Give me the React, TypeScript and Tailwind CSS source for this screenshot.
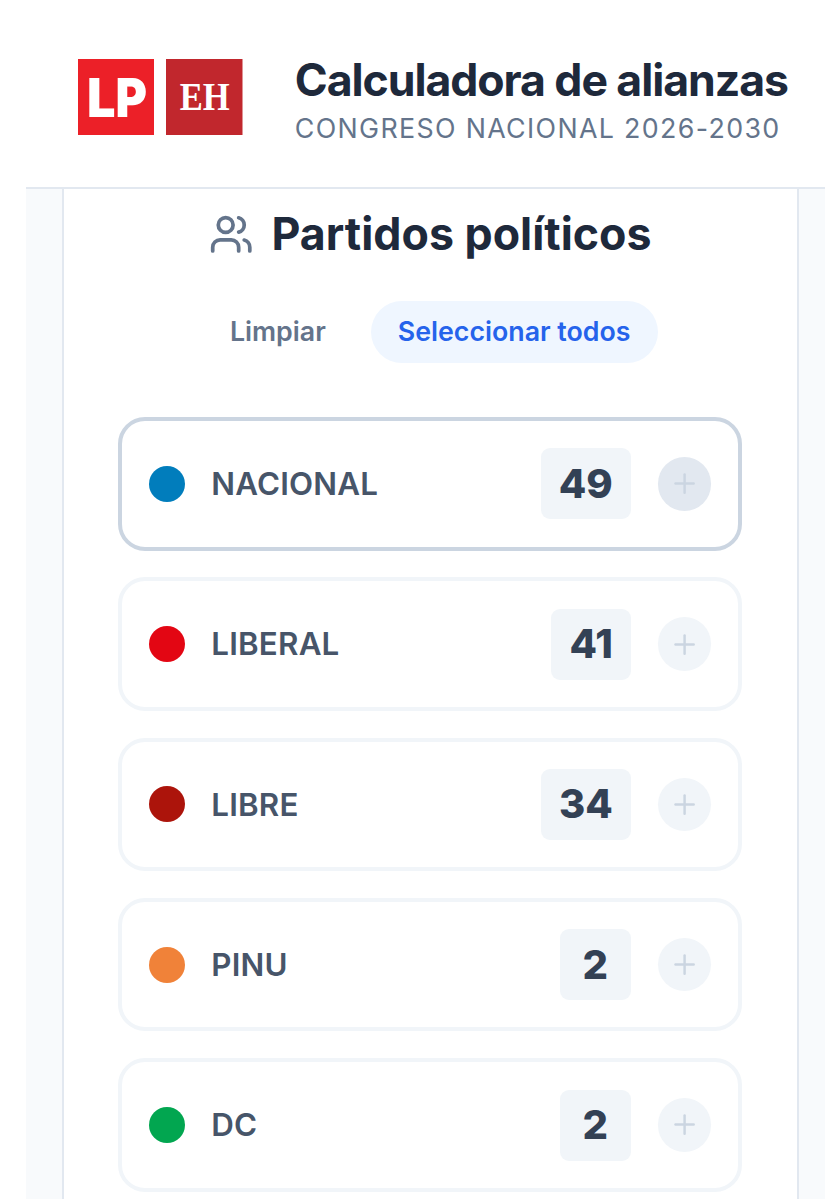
import { Plus, Users } from "lucide-react";

type Party = { name: string; seats: number; dot: string; active?: boolean };

const parties: Party[] = [
  { name: "NACIONAL", seats: 49, dot: "bg-[#017dbc]", active: true },
  { name: "LIBERAL", seats: 41, dot: "bg-[#e30613]" },
  { name: "LIBRE", seats: 34, dot: "bg-[#ac140b]" },
  { name: "PINU", seats: 2, dot: "bg-[#f08239]" },
  { name: "DC", seats: 2, dot: "bg-[#02a650]" },
];

function Logos() {
  return (
    <div className="flex gap-3">
      <svg width="76.5" height="76.5" viewBox="0 0 76.5 76.5">
        <rect width="76.5" height="76.5" fill="#ec2028" />
        <g fontFamily="Inter" fontWeight="900" fontSize="54" fill="#fff">
          <text x="9" y="57.8" textLength="28.5" lengthAdjust="spacingAndGlyphs">L</text>
          <text x="37.6" y="57.8" textLength="31.5" lengthAdjust="spacingAndGlyphs">P</text>
        </g>
      </svg>
      <svg width="76.5" height="76.5" viewBox="0 0 76.5 76.5">
        <rect width="76.5" height="76.5" fill="#c1272d" />
        <text x="13.8" y="51.3" fontFamily="Liberation Serif" fontWeight="700" fontSize="39" textLength="50" lengthAdjust="spacingAndGlyphs" fill="#fff">EH</text>
      </svg>
    </div>
  );
}

function PartyRow({ party }: { party: Party }) {
  return (
    <button
      className={`flex h-[133.5px] w-full shrink-0 items-center rounded-[27px] border-4 bg-white pr-[26.5px] pl-[27px] ${
        party.active ? "border-[#cbd5e1]" : "border-[#f1f5f9]"
      }`}
    >
      <span className={`size-9 shrink-0 rounded-full ${party.dot}`} />
      <span className="ml-[26.7px] pt-[2px] text-[31.3px] leading-none font-semibold tracking-[0.2px] text-[#475569]">{party.name}</span>
      <span className="ml-auto flex h-[71px] min-w-[71px] items-center justify-center rounded-[9px] bg-[#f1f5f9] px-[18px] text-[40px] leading-none font-extrabold text-[#334155]">
        {party.seats}
      </span>
      <span
        className={`ml-[27px] flex size-[53.5px] shrink-0 items-center justify-center rounded-full text-[#cbd5e1] ${
          party.active ? "bg-[#e2e8f0]" : "bg-[#f1f5f9]"
        }`}
      >
        <Plus size={31.2} strokeWidth={1.9} />
      </span>
    </button>
  );
}

export default function App() {
  return (
    <div className="flex h-[1199px] w-[825px] flex-col overflow-hidden bg-white font-['Inter',sans-serif]">
      <header className="flex h-[186.5px] shrink-0 pt-[58.5px] pl-[77.5px]">
        <Logos />
        <div className="-mt-px ml-[52.3px] whitespace-nowrap">
          <h1 className="text-[44.6px] leading-[44px] font-bold tracking-[-0.024em] text-[#1e293b]">Calculadora de alianzas</h1>
          <p className="mt-[8px] text-[26.8px] leading-[36px] tracking-[0.05em] text-[#64748b]">CONGRESO NACIONAL 2026-2030</p>
        </div>
      </header>
      <div className="ml-[26px] flex min-h-0 grow flex-col border-t-2 border-[#e2e8f0] bg-[#f8fafc] pl-9">
        <main className="flex min-h-0 w-[736.5px] grow flex-col border-x-2 border-[#e2e8f0] bg-white pt-[19px] pr-[54.7px] pl-[53.6px]">
          <div className="flex h-[54px] shrink-0 items-center justify-center gap-[18px] pl-[1px] text-[#64748b]">
            <Users size={44.5} strokeWidth={2} />
            <h2 className="text-[44.7px] leading-none font-bold whitespace-nowrap text-[#1e293b]">Partidos políticos</h2>
          </div>
          <div className="mt-[39px] flex h-[62px] shrink-0 justify-center gap-[18px] pl-[1px] text-[26.75px] font-semibold">
            <button className="rounded-full px-[27px] text-[#64748b]">Limpiar</button>
            <button className="rounded-full bg-[#eff6ff] px-[27px] text-[#2563eb]">Seleccionar todos</button>
          </div>
          <div className="mt-[54.6px] flex flex-col gap-[26.8px]">
            {parties.map((party) => (
              <PartyRow key={party.name} party={party} />
            ))}
          </div>
        </main>
      </div>
    </div>
  );
}
